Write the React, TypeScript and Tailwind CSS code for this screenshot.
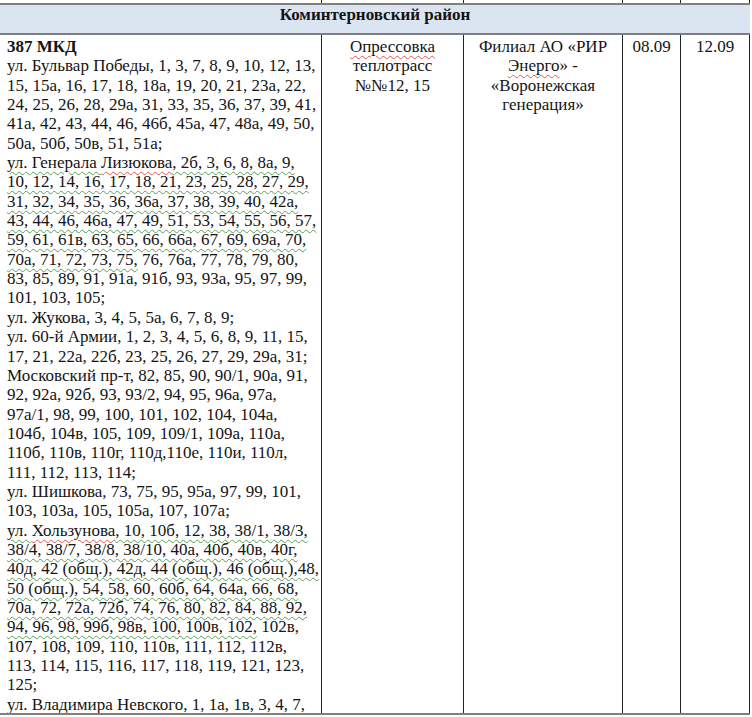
import React from "react";

type Seg = [string, ("g" | "r")?];

const lines: Seg[][] = [
  [["ул. Бульвар Победы, 1, 3, 7, 8, 9, 10, 12, 13,"]],
  [["15, 15а, 16, 17, 18, 18а, 19, 20, 21, 23а, 22,"]],
  [["24, 25, 26, 28, 29а, 31, 33, 35, 36, 37, 39, 41,"]],
  [["41а, 42, 43, 44, 46, 46б, 45а, 47, 48а, 49, 50,"]],
  [["50а, 50б, 50в, 51, 51а;"]],
  [["ул. Генерала ", "g"], ["Лизюкова", "r"], [", 2б, 3, 6, 8, 8а, 9,", "g"]],
  [["10, 12, 14, 16, 17, 18, 21, 23, 25, 28, 27, 29,", "g"]],
  [["31, 32, 34, 35, 36, 36а, 37, 38, 39, 40, 42а,", "g"]],
  [["43, 44, 46, 46а, 47, 49, 51, 53, 54, 55, 56, 57,", "g"]],
  [["59, 61, 61в, 63, 65, 66, 66а, 67, 69, 69а, 70,", "g"]],
  [["70а, 71, 72, 73, 75,", "g"], [" 76, 76а, 77, 78, 79, 80,"]],
  [["83, 85, 89, 91, 91а, 91б, 93, 93а, 95, 97, 99,"]],
  [["101, 103, 105;"]],
  [["ул. Жукова, 3, 4, 5, 5а, 6, 7, 8, 9;"]],
  [["ул. 60-й Армии, 1, 2, 3, 4, 5, 6, 8, 9, 11, 15,"]],
  [["17, 21, 22а, 22б, 23, 25, 26, 27, 29, 29а, 31;"]],
  [["Московский пр-т, 82, 85, 90, 90/1, 90а, 91,"]],
  [["92, 92а, 92б, 93, 93/2, 94, 95, 96а, 97а,"]],
  [["97а/1, 98, 99, 100, 101, 102, 104, 104а,"]],
  [["104б, 104в, 105, 109, 109/1, 109а, 110а,"]],
  [["110б, 110в, 110г, 110д,110е, 110и, 110л,"]],
  [["111, 112, 113, 114;"]],
  [["ул. Шишкова, 73, 75, 95, 95а, 97, 99, 101,"]],
  [["103, 103а, 105, 105а, 107, 107а;"]],
  [["ул. ", "g"], ["Хользунова", "r"], [", 10, 10б, 12, 38, 38/1, 38/3,", "g"]],
  [["38/4, 38/7, 38/8, 38/10, 40а, 40б, 40в, 40г,", "g"]],
  [["40д, 42 (общ.), 42д, 44 (общ.), 46 (общ.),48,", "g"]],
  [["50 (общ.), 54, 58, 60, 60б, 64, 64а, 66, 68,", "g"]],
  [["70а, 72, 72а, 72б, 74, 76, 80, 82, 84, 88, 92,", "g"]],
  [["94, 96, 98, 99б, 98в, 100, 100в, 102,", "g"], [" 102в,"]],
  [["107, 108, 109, 110, 110в, 111, 112, 112в,"]],
  [["113, 114, 115, 116, 117, 118, 119, 121, 123,"]],
  [["125;"]],
  [["ул. Владимира Невского, 1, 1а, 1в, 3, 4, 7,", "g"]],
];

function Mark({ seg }: { seg: Seg }) {
  const [text, kind] = seg;
  if (kind === "g")
    return (
      <span className="underline decoration-wavy decoration-[#5aa05a] decoration-1 underline-offset-[3px]">
        {text}
      </span>
    );
  if (kind === "r")
    return (
      <span className="underline decoration-wavy decoration-[#e05656] decoration-1 underline-offset-[3px]">
        {text}
      </span>
    );
  return <span>{text}</span>;
}

export default function App() {
  return (
    <div className="w-[752px] h-[717px] overflow-hidden bg-white text-[#141414] font-['Liberation_Serif',serif] text-[17px] leading-[19.35px]">
      {/* tail of the previous row */}
      <div className="grid grid-cols-[322px_142px_159px_58px_69px] h-[3px]">
        <div className="border-r border-[#222]" />
        <div className="border-r border-[#222]" />
        <div className="border-r border-[#222]" />
        <div className="border-r border-[#222]" />
        <div className="border-r border-[#222]" />
      </div>

      {/* district band */}
      <div className="w-[750px] h-[32px] bg-[#dbe5f1] border-y-2 border-[#7f7f7f] text-center font-bold leading-[19px]">
        Коминтерновский район
      </div>

      {/* main row */}
      <div className="grid grid-cols-[322px_142px_159px_58px_69px] h-[678px] overflow-hidden">
        <div className="border-r border-[#222] pl-[7px] pt-[2px]">
          <div className="font-bold">387 МКД</div>
          {lines.map((line, i) => (
            <div key={i} className="whitespace-nowrap">
              {line.map((seg, j) => (
                <Mark key={j} seg={seg} />
              ))}
            </div>
          ))}
        </div>
        <div className="border-r border-[#222] text-center pt-[2px]">
          <div>
            <Mark seg={["Опрессовка", "r"]} />
          </div>
          <div>теплотрасс</div>
          <div>№№12, 15</div>
        </div>
        <div className="border-r border-[#222] text-center pt-[2px]">
          <div>Филиал АО «РИР</div>
          <div>
            <Mark seg={["Энерго", "r"]} />» -
          </div>
          <div>«Воронежская</div>
          <div>генерация»</div>
        </div>
        <div className="border-r border-[#222] text-center pt-[2px]">08.09</div>
        <div className="border-r border-[#222] text-center pt-[2px]">12.09</div>
      </div>
      <div className="w-[750px] h-[2px] bg-[#7f7f7f]" />
    </div>
  );
}
